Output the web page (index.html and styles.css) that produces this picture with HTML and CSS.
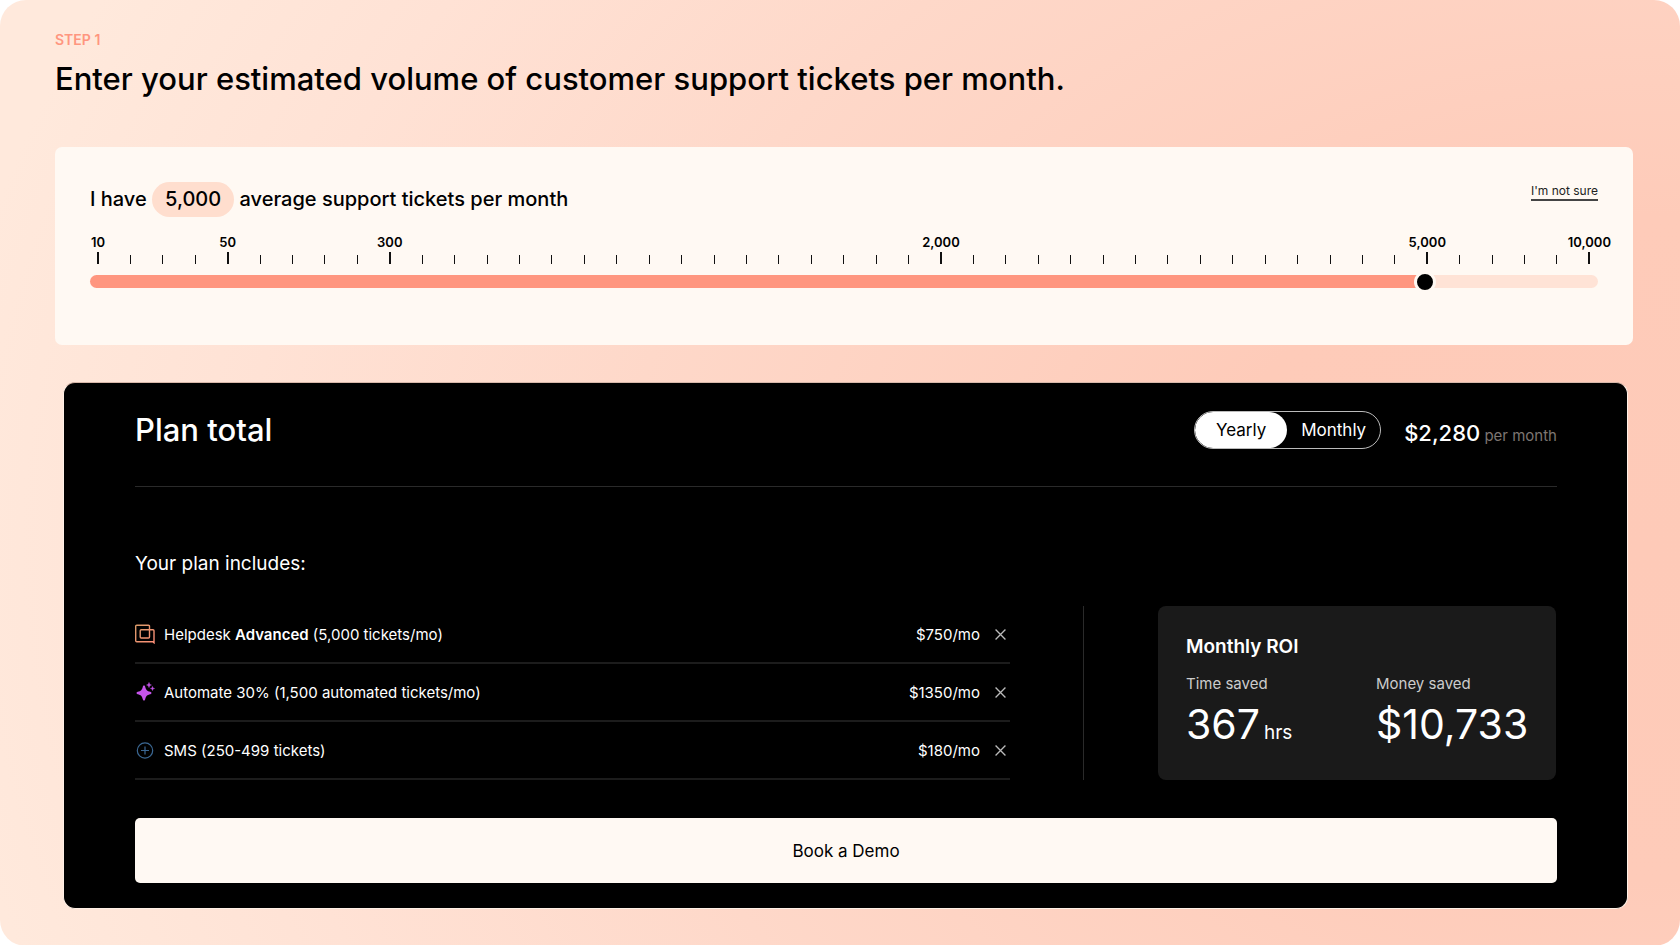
FILE: index.html
```html
<!DOCTYPE html>
<html lang="en">
<head>
    <meta charset="UTF-8">
    <meta name="viewport" content="width=device-width, initial-scale=1.0">
    <title>Pricing Calculator</title>
    <link rel="stylesheet" href="styles.css">
</head>
<body>

    <main class="calculator">
        <header class="intro">
            <p class="step">STEP 1</p>
            <h1 class="title">Enter your estimated volume of customer support tickets per month.</h1>
        </header>

        <section class="volume">
            <div class="volume-top">
                <label class="volume-label" for="tickets">I have <span class="volume-value">5,000</span> average support tickets per month</label>
                <a class="not-sure" href="#">I'm not sure</a>
            </div>
            <div class="ruler"></div>
            <input class="slider" id="tickets" type="range" min="0" max="46" value="41">
        </section>

        <section class="plan">
            <div class="plan-header">
                <h2 class="plan-title">Plan total</h2>
                <div class="billing">
                    <button class="billing-btn active" type="button">Yearly</button>
                    <button class="billing-btn" type="button">Monthly</button>
                </div>
                <p class="price"><strong>$2,280</strong> per month</p>
            </div>

            <h3 class="includes">Your plan includes:</h3>

            <div class="plan-body">
                <ul class="items">
                    <li class="item">
                        <svg class="item-icon" viewBox="0 0 20 20" fill="none" stroke="url(#desk)" stroke-width="1.4">
                            <defs>
                                <linearGradient id="desk" x1="0" y1="0" x2="1" y2="1">
                                    <stop offset="0" stop-color="#d99a68"/>
                                    <stop offset="1" stop-color="#ff8f78"/>
                                </linearGradient>
                            </defs>
                            <path d="M14.5 13V2.200a1 1 0 0 0-1-1H1.700a1 1 0 0 0-1 1v14.600a1 1 0 0 0 1 1h16.100l1.200 1V6.700a1 1 0 0 0-1-1H6.200a1 1 0 0 0-1 1v6.300a1 1 0 0 0 1 1h7.300a1 1 0 0 0 1-1"/>
                        </svg>
                        <span class="item-name">Helpdesk <strong>Advanced</strong> (5,000 tickets/mo)</span>
                        <span class="item-price">$750/mo</span>
                        <button class="remove" type="button" aria-label="Remove Helpdesk">
                            <svg viewBox="0 0 10 10"><path d="M0.500 0.500l9 9M9.500 0.500l-9 9"/></svg>
                        </button>
                    </li>
                    <li class="item">
                        <svg class="item-icon" viewBox="0 0 20 20" fill="#c654ec">
                            <path d="M9 3.500c.7 0 1 .5 1.200 1.200.8 3.300 1.800 4.300 5.100 5.100.8.200 1.200.6 1.200 1.200s-.4 1-1.200 1.200c-3.300.8-4.300 1.800-5.100 5.100-.2.800-.5 1.200-1.200 1.200s-1-.4-1.200-1.200C7 14 6 13 2.700 12.200 1.900 12 1.500 11.600 1.500 11s.4-1 1.200-1.200C6 9 7 8 7.800 4.700 8 4 8.300 3.500 9 3.500z"/>
                            <path d="M14 .5c.4 1.700.8 2.100 2.400 2.500-1.600.4-2 .8-2.400 2.500-.4-1.700-.8-2.100-2.400-2.500 1.600-.4 2-.8 2.400-2.500zM17.500 4.500c.3 1.400.7 1.700 2 2-1.300.3-1.700.6-2 2-.3-1.400-.7-1.700-2-2 1.300-.3 1.700-.6 2-2z" stroke="#c654ec" stroke-width=".5"/>
                        </svg>
                        <span class="item-name">Automate 30% (1,500 automated tickets/mo)</span>
                        <span class="item-price">$1350/mo</span>
                        <button class="remove" type="button" aria-label="Remove Automate">
                            <svg viewBox="0 0 10 10"><path d="M0.500 0.500l9 9M9.500 0.500l-9 9"/></svg>
                        </button>
                    </li>
                    <li class="item">
                        <svg class="item-icon" viewBox="0 0 20 20" fill="none" stroke="#3b6894" stroke-width="1.200">
                            <circle cx="10" cy="10.500" r="7.700"/>
                            <path d="M10 6.500v8M6 10.500h8"/>
                        </svg>
                        <span class="item-name">SMS (250-499 tickets)</span>
                        <span class="item-price">$180/mo</span>
                        <button class="remove" type="button" aria-label="Remove SMS">
                            <svg viewBox="0 0 10 10"><path d="M0.500 0.500l9 9M9.500 0.500l-9 9"/></svg>
                        </button>
                    </li>
                </ul>

                <aside class="roi">
                    <h3 class="roi-title">Monthly ROI</h3>
                    <div class="roi-grid">
                        <div class="roi-stat">
                            <div class="roi-label">Time saved</div>
                            <div class="roi-value">367<small>hrs</small></div>
                        </div>
                        <div class="roi-stat">
                            <div class="roi-label">Money saved</div>
                            <div class="roi-value">$10,733</div>
                        </div>
                    </div>
                </aside>
            </div>

            <button class="demo" type="button">Book a Demo</button>
        </section>
    </main>

    <script>
        const ruler = document.querySelector('.ruler');
        const slider = document.querySelector('.slider');
        const volumeValue = document.querySelector('.volume-value');
        const billingButtons = document.querySelectorAll('.billing-btn');

        // slider step -> ticket volume
        const stops = { 0: 10, 4: 50, 9: 300, 26: 2000, 41: 5000, 46: 10000 };
        const steps = Object.keys(stops).map(Number);

        function ticketsAt(step) {
            const next = steps.find(s => s >= step);
            if (next === step) return stops[step];
            const prev = steps[steps.indexOf(next) - 1];
            const part = (step - prev) / (next - prev);
            return Math.round((stops[prev] + part * (stops[next] - stops[prev])) / 10) * 10;
        }

        function updateSlider() {
            slider.style.setProperty('--fill', slider.value / slider.max);
            volumeValue.textContent = ticketsAt(Number(slider.value)).toLocaleString('en-US');
        }

        for (let i = 0; i <= 46; i++) {
            const tick = document.createElement('span');
            tick.className = 'tick';
            if (stops[i]) {
                tick.classList.add('tick-major');
                tick.textContent = stops[i].toLocaleString('en-US');
            }
            ruler.appendChild(tick);
        }

        slider.addEventListener('input', updateSlider);

        billingButtons.forEach(button => {
            button.addEventListener('click', () => {
                billingButtons.forEach(b => b.classList.remove('active'));
                button.classList.add('active');
            });
        });

        updateSlider();
    </script>
</body>
</html>
```

FILE: styles.css
```css
* {
    margin: 0;
    padding: 0;
    box-sizing: border-box;
}

body {
    font-family: Inter, "Liberation Sans", sans-serif;
    font-size: 15px;
    background-color: #fff;
    color: #000;
}

button {
    font-family: inherit;
    border: none;
    cursor: pointer;
}

.calculator {
    min-height: 100vh;
    padding: 30px 47px 37px 55px;
    border-radius: 26px;
    background: radial-gradient(ellipse 102% 135% at 98% 58%, #fecab8 0%, #fecbb9 26%, #fed8c9 60%, #ffe2d5 82%, #ffe9dc 100%);
}

.intro {
    margin-bottom: 48px;
}

.step {
    font-size: 14px;
    font-weight: 600;
    line-height: 20px;
    color: #ff967f;
}

.title {
    font-size: 31px;
    font-weight: 500;
    line-height: 40px;
    margin-top: 9px;
}

/* Ticket volume */
.volume {
    background: #fff9f3;
    border-radius: 7px;
    padding: 35px 35px 58px;
}

.volume-top {
    display: flex;
    justify-content: space-between;
    align-items: flex-start;
}

.volume-label {
    font-size: 20px;
    font-weight: 500;
    line-height: 35px;
}

.volume-value {
    display: inline-block;
    padding: 0 13px;
    border-radius: 18px;
    background: #ffdece;
}

.not-sure {
    font-size: 12px;
    line-height: 17px;
    color: #222;
    text-decoration: none;
    border-bottom: 2px solid #444;
}

.ruler {
    display: flex;
    justify-content: space-between;
    align-items: flex-end;
    height: 30px;
    margin: 17px 8px 10px;
}

.tick {
    display: flex;
    flex-direction: column;
    align-items: center;
    width: 0;
    font-size: 13px;
    font-weight: 600;
    line-height: 16px;
}

.tick::after {
    content: "";
    width: 1px;
    height: 9px;
    background: #111;
}

.tick-major::after {
    width: 2px;
    height: 12px;
    margin-top: 2px;
}

.slider {
    display: block;
    width: 100%;
    height: 22px;
    margin: -4px 0 -5px;
    appearance: none;
    background: none;
    cursor: pointer;
}

.slider::-webkit-slider-runnable-track {
    height: 13px;
    border-radius: 7px;
    background: linear-gradient(to right, #ff967f calc(11px + (100% - 22px) * var(--fill)), #ffe3d6 0);
}

.slider::-webkit-slider-thumb {
    appearance: none;
    width: 22px;
    height: 22px;
    margin-top: -4px;
    border: 3px solid #fff9f3;
    border-radius: 50%;
    background: #000;
}

/* Plan total */
.plan {
    margin: 37px 5px 0 8px;
    padding: 26px 70px 25px 71px;
    border: 1px solid #fff0e6;
    border-top-color: #d8b8aa;
    border-radius: 12px;
    background: #000;
    color: #fff;
}

.plan-header {
    display: flex;
    align-items: center;
    padding-bottom: 36px;
    border-bottom: 1px solid #2a2a2a;
}

.plan-title {
    flex: 1;
    font-size: 31px;
    font-weight: 500;
    line-height: 38px;
}

.billing {
    display: flex;
    height: 38px;
    border: 1px solid #bbb;
    border-radius: 19px;
    overflow: hidden;
}

.billing-btn {
    padding: 0 14px;
    font-size: 17px;
    background: none;
    color: #fff;
}

.billing-btn.active {
    padding: 0 21px;
    border-radius: 18px;
    background: #fff;
    color: #000;
}

.price {
    margin-left: 23px;
    padding-top: 10px;
    font-size: 15px;
    line-height: 28px;
    color: #7d7672;
}

.price strong {
    font-size: 22px;
    font-weight: 500;
    color: #fff;
}

.includes {
    margin: 63px 0 28px;
    font-size: 19px;
    font-weight: 400;
    line-height: 28px;
}

.plan-body {
    display: flex;
    padding-right: 1px;
}

.items {
    flex: 1;
    list-style: none;
}

.item {
    display: flex;
    align-items: center;
    height: 58px;
    border-bottom: 2px solid #1c1c1c;
}

.item-icon {
    width: 20px;
    height: 20px;
    margin-right: 9px;
}

.item-name {
    flex: 1;
}

.item-name strong {
    font-weight: 600;
}

.item-price {
    margin-right: 15px;
}

.remove {
    display: flex;
    padding: 0 4px 0 0;
    background: none;
}

.remove svg {
    width: 11px;
    height: 11px;
    stroke: #bbb;
    stroke-width: 1.2;
    overflow: visible;
}

.roi {
    position: relative;
    width: 398px;
    margin-left: 148px;
    padding: 27px 28px 20px;
    border-radius: 8px;
    background: #1a1a1a;
}

/* separator between the items and the ROI card */
.roi::before {
    content: "";
    position: absolute;
    top: 0;
    bottom: 0;
    left: -75px;
    width: 1px;
    background: #2a2a2a;
}

.roi-title {
    font-size: 19px;
    font-weight: 600;
    line-height: 28px;
}

.roi-grid {
    display: grid;
    grid-template-columns: 190px 1fr;
    margin-top: 13px;
}

.roi-label {
    line-height: 20px;
    color: #ccc;
}

.roi-value {
    display: flex;
    align-items: baseline;
    gap: 4px;
    font-size: 41px;
    line-height: 52px;
    margin-top: 4px;
}

.roi-value small {
    font-size: 19px;
}

.demo {
    display: block;
    width: 100%;
    height: 65px;
    margin-top: 38px;
    border-radius: 5px;
    background: #fff9f3;
    font-size: 17px;
    color: #000;
}
```
